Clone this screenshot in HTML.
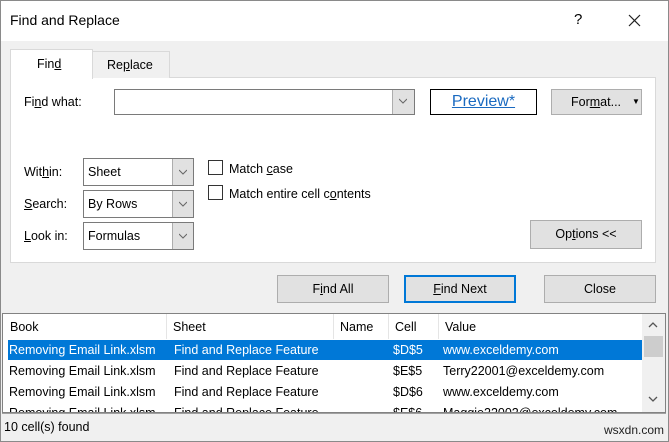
<!DOCTYPE html>
<html><head><style>
*{margin:0;padding:0;box-sizing:border-box}
body{width:669px;height:442px;overflow:hidden;background:#f0f0f0;font-family:"Liberation Sans",sans-serif;font-size:12.5px;color:#000;position:relative}
.a{position:absolute;white-space:nowrap}
.btn{position:absolute;background:#e1e1e1;border:1px solid #adadad;text-align:center}
.sel{position:absolute;background:#fff;border:1px solid #7a7a7a}
.dd{position:absolute;top:0;right:0;bottom:0;width:21px;background:#e1e1e1;border-left:1px solid #adadad}
.chev{position:absolute;left:6px;top:7px;width:8px;height:8px}
.cb{position:absolute;width:15px;height:15px;border:1px solid #333;background:#fff}
u{text-decoration:underline}
.row{position:absolute;left:7px;width:634px;height:20px;line-height:20px}
.row span{position:absolute;top:0}
</style></head><body>
<div class="a" style="left:0;top:0;width:669px;height:41px;background:#fff;border:1px solid #8a8a8a;border-bottom:none"></div>
<div class="a" style="left:0;top:0;width:1px;height:442px;background:#8a8a8a"></div>
<div class="a" style="right:0;top:0;width:1px;height:442px;background:#8a8a8a"></div>
<div class="a" style="left:10px;top:12px;font-size:14px">Find and Replace</div>
<div class="a" style="left:574px;top:11px;font-size:15px">?</div>
<svg class="a" style="left:628px;top:14px" width="13" height="13"><path d="M1 1L12 12M12 1L1 12" stroke="#222" stroke-width="1.2"/></svg>

<div class="a" style="left:10px;top:77px;width:646px;height:186px;background:#fff;border:1px solid #d9d9d9"></div>
<div class="a" style="left:92px;top:51px;width:78px;height:27px;background:#f0f0f0;border:1px solid #d9d9d9;border-bottom:none"></div>
<div class="a" style="left:107px;top:58px">Re<u>p</u>lace</div>
<div class="a" style="left:10px;top:49px;width:83px;height:30px;background:#fff;border:1px solid #d9d9d9;border-bottom:none"></div>
<div class="a" style="left:37px;top:57px">Fin<u>d</u></div>

<div class="a" style="left:24px;top:95px">Fi<u>n</u>d what:</div>
<div class="sel" style="left:114px;top:89px;width:301px;height:26px"><div class="dd" style="width:22px"><svg class="chev" viewBox="0 0 8 8"><path d="M0 2L4 6L8 2" fill="none" stroke="#666"/></svg></div></div>
<div class="a" style="left:430px;top:89px;width:107px;height:26px;border:1px solid #000;background:#fff;text-align:center;line-height:24px;font-size:16px;color:#1a6ac0"><u>Preview*</u></div>
<div class="btn" style="left:551px;top:89px;width:91px;height:26px;line-height:24px;text-align:left;padding-left:19px">For<u>m</u>at... <span style="font-size:8px;position:absolute;left:80px">▼</span></div>

<div class="a" style="left:24px;top:165px">Wit<u>h</u>in:</div>
<div class="a" style="left:24px;top:197px"><u>S</u>earch:</div>
<div class="a" style="left:24px;top:229px"><u>L</u>ook in:</div>
<div class="sel" style="left:83px;top:158px;width:111px;height:28px"><span class="a" style="left:4px;top:6px">Sheet</span><div class="dd"><svg class="chev" style="top:9px" viewBox="0 0 8 8"><path d="M0 2L4 6L8 2" fill="none" stroke="#666"/></svg></div></div>
<div class="sel" style="left:83px;top:190px;width:111px;height:28px"><span class="a" style="left:4px;top:6px">By Rows</span><div class="dd"><svg class="chev" style="top:9px" viewBox="0 0 8 8"><path d="M0 2L4 6L8 2" fill="none" stroke="#666"/></svg></div></div>
<div class="sel" style="left:83px;top:222px;width:111px;height:28px"><span class="a" style="left:4px;top:6px">Formulas</span><div class="dd"><svg class="chev" style="top:9px" viewBox="0 0 8 8"><path d="M0 2L4 6L8 2" fill="none" stroke="#666"/></svg></div></div>
<div class="cb" style="left:208px;top:160px"></div>
<div class="a" style="left:229px;top:162px">Match <u>c</u>ase</div>
<div class="cb" style="left:208px;top:185px"></div>
<div class="a" style="left:229px;top:187px">Match entire cell c<u>o</u>ntents</div>
<div class="btn" style="left:530px;top:220px;width:112px;height:29px;line-height:27px">Op<u>t</u>ions &lt;&lt;</div>

<div class="btn" style="left:277px;top:275px;width:112px;height:28px;line-height:26px">F<u>i</u>nd All</div>
<div class="btn" style="left:404px;top:275px;width:112px;height:28px;line-height:26px;border:2px solid #0078d7;line-height:24px"><u>F</u>ind Next</div>
<div class="btn" style="left:544px;top:275px;width:112px;height:28px;line-height:26px">Close</div>

<div class="a" style="left:2px;top:313px;width:664px;height:100px;background:#fff;border:1px solid #828282;overflow:hidden">
 <div class="a" style="left:163px;top:0;width:1px;height:25px;background:#e5e5e5"></div>
 <div class="a" style="left:330px;top:0;width:1px;height:25px;background:#e5e5e5"></div>
 <div class="a" style="left:385px;top:0;width:1px;height:25px;background:#e5e5e5"></div>
 <div class="a" style="left:435px;top:0;width:1px;height:25px;background:#e5e5e5"></div>
 <div class="a" style="left:7px;top:6px">Book</div>
 <div class="a" style="left:170px;top:6px">Sheet</div>
 <div class="a" style="left:337px;top:6px">Name</div>
 <div class="a" style="left:392px;top:6px">Cell</div>
 <div class="a" style="left:442px;top:6px">Value</div>
 <div class="a" style="left:639px;top:0;width:23px;height:99px;background:#f0f0f0"></div>
 <div class="a" style="left:641px;top:22px;width:19px;height:21px;background:#cdcdcd"></div>
 <svg class="a" style="left:645px;top:8px" width="10" height="6"><path d="M1 5L5 1L9 5" fill="none" stroke="#555" stroke-width="1.3"/></svg>
 <svg class="a" style="left:645px;top:82px" width="10" height="6"><path d="M1 1L5 5L9 1" fill="none" stroke="#555" stroke-width="1.3"/></svg>
 <div class="row" style="left:5px;top:26px;background:#0078d7;color:#fff"><span style="left:1px">Removing Email Link.xlsm</span><span style="left:166px">Find and Replace Feature</span><span style="left:385px">$D$5</span><span style="left:435px">www.exceldemy.com</span></div>
 <div class="row" style="left:5px;top:47px"><span style="left:1px">Removing Email Link.xlsm</span><span style="left:166px">Find and Replace Feature</span><span style="left:385px">$E$5</span><span style="left:435px">Terry22001@exceldemy.com</span></div>
 <div class="row" style="left:5px;top:68px"><span style="left:1px">Removing Email Link.xlsm</span><span style="left:166px">Find and Replace Feature</span><span style="left:385px">$D$6</span><span style="left:435px">www.exceldemy.com</span></div>
 <div class="row" style="left:5px;top:89px"><span style="left:1px">Removing Email Link.xlsm</span><span style="left:166px">Find and Replace Feature</span><span style="left:385px">$E$6</span><span style="left:435px">Maggie22002@exceldemy.com</span></div>
</div>
<div class="a" style="left:2px;top:413px;width:664px;height:1px;background:#a0a0a0"></div>
<div class="a" style="left:4px;top:420px">10 cell(s) found</div>
<div class="a" style="left:604px;top:423px;font-size:12px;color:#222">wsxdn.com</div>
<div class="a" style="left:0;top:441px;width:669px;height:1px;background:#8a8a8a"></div>
</body></html>
